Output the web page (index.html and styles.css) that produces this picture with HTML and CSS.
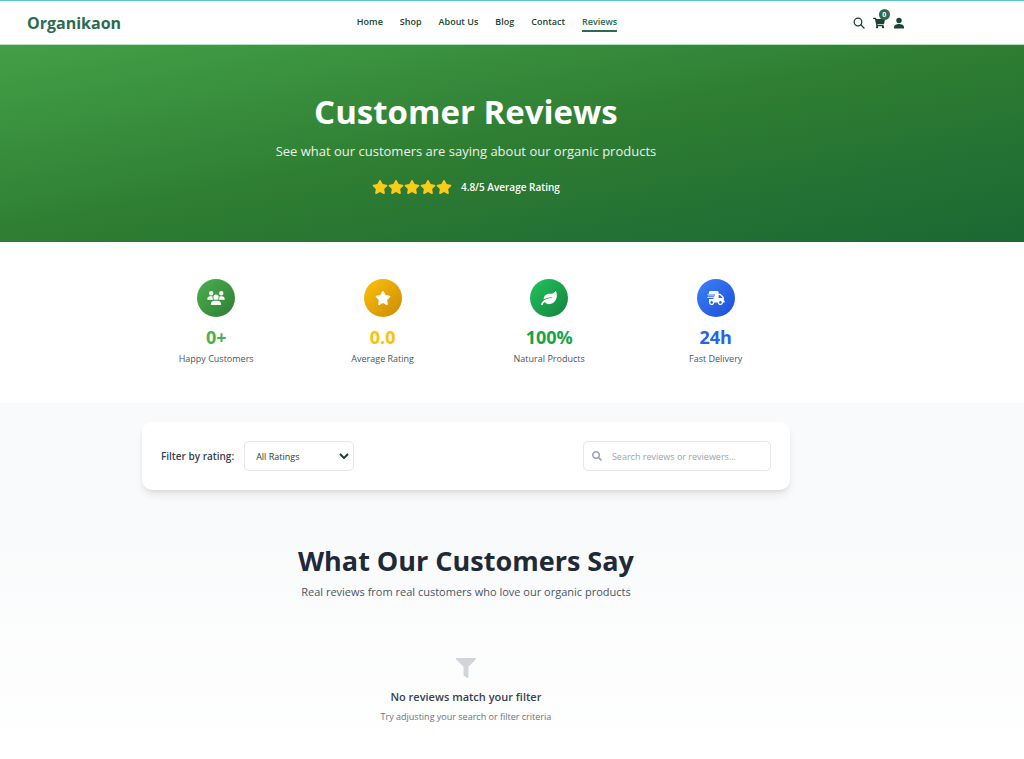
FILE: index.html
```html
<!DOCTYPE html>
<html lang="en">
<head>
  <meta charset="UTF-8" />
  <meta name="viewport" content="width=device-width, initial-scale=1.0" />
  <title>Customer Reviews | Organikaon</title>
  <link rel="stylesheet" href="styles.css">
</head>
<body>
  <header class="site-header">
    <a href="#" class="logo">Organikaon</a>
    <nav class="nav">
      <a href="#">Home</a>
      <a href="#">Shop</a>
      <a href="#">About Us</a>
      <a href="#">Blog</a>
      <a href="#">Contact</a>
      <a href="#" class="active">Reviews</a>
    </nav>
    <div class="actions">
      <button type="button" aria-label="Search">
        <svg viewBox="0 0 24 24" fill="none" stroke="currentColor" stroke-width="2.6" stroke-linecap="round"><circle cx="10" cy="10" r="7.6"/><path d="M15.8 15.8L22 22"/></svg>
      </button>
      <button type="button" aria-label="Cart" class="cart">
        <svg viewBox="0 0 576 512" fill="currentColor"><path d="M528.12 301.319l47.273-208C578.806 78.301 567.391 64 551.99 64H159.208l-9.166-44.81C147.758 8.021 137.93 0 126.529 0H24C10.745 0 0 10.745 0 24v16c0 13.255 10.745 24 24 24h69.883l70.248 343.435C147.325 417.1 136 435.222 136 456c0 30.928 25.072 56 56 56s56-25.072 56-56c0-15.674-6.447-29.835-16.824-40h209.647C430.447 426.165 424 440.326 424 456c0 30.928 25.072 56 56 56s56-25.072 56-56c0-22.172-12.888-41.332-31.579-50.405l5.517-24.276c3.413-15.018-8.002-29.319-23.403-29.319H218.117l-6.545-32h293.145c11.206 0 20.92-7.754 23.403-18.681z"/></svg>
        <span class="badge">0</span>
      </button>
      <button type="button" aria-label="Account">
        <svg viewBox="0 0 24 24" fill="currentColor"><circle cx="12" cy="7" r="5.4"/><path d="M12 14c-4.500 0-10 2-10 6.500V23h20v-2.500C22 16 16.500 14 12 14z"/></svg>
      </button>
    </div>
  </header>

  <!-- Star shape shared by the hero rating and the stats -->
  <svg class="sprite" aria-hidden="true">
    <symbol id="star" viewBox="0 0 576 512"><path d="M259.3 17.8L194 150.2 47.9 171.5c-26.2 3.8-36.7 36.1-17.7 54.6l105.7 103-25 145.500c-4.500 26.3 23.2 46 46.4 33.7L288 439.6l130.7 68.7c23.2 12.2 50.9-7.4 46.4-33.7l-25-145.500 105.7-103c19-18.500 8.500-50.8-17.7-54.6L382 150.2 316.7 17.8c-11.7-23.6-45.6-23.9-57.4 0z"/></symbol>
  </svg>

  <section class="hero">
    <h1>Customer Reviews</h1>
    <p>See what our customers are saying about our organic products</p>
    <div class="rating">
      <div class="stars">
        <svg><use href="#star"/></svg>
        <svg><use href="#star"/></svg>
        <svg><use href="#star"/></svg>
        <svg><use href="#star"/></svg>
        <svg><use href="#star"/></svg>
      </div>
      <span>4.8/5 Average Rating</span>
    </div>
  </section>

  <section class="stats">
    <div class="stats-grid">
      <div class="stat customers">
        <div class="stat-icon">
          <svg viewBox="0 0 640 512" fill="currentColor"><path d="M144 0a80 80 0 1 1 0 160A80 80 0 1 1 144 0zM512 0a80 80 0 1 1 0 160A80 80 0 1 1 512 0zM0 298.7C0 239.8 47.8 192 106.7 192h42.7c15.9 0 31 3.5 44.6 9.7c-1.3 7.2-1.9 14.7-1.9 22.3c0 38.2 16.8 72.5 43.3 96c-.2 0-.4 0-.7 0H21.3C9.6 320 0 310.4 0 298.7zM405.3 320c-.2 0-.4 0-.7 0c26.6-23.5 43.3-57.8 43.3-96c0-7.6-.7-15-1.9-22.3c13.6-6.3 28.7-9.7 44.6-9.7h42.7C592.2 192 640 239.8 640 298.7c0 11.8-9.6 21.3-21.3 21.3H405.3zM224 224a96 96 0 1 1 192 0 96 96 0 1 1 -192 0zM128 485.3C128 411.7 187.7 352 261.3 352H378.7C452.3 352 512 411.7 512 485.3c0 14.7-11.9 26.7-26.7 26.7H154.7c-14.7 0-26.7-11.9-26.7-26.7z"/></svg>
        </div>
        <div class="stat-value">0+</div>
        <div class="stat-label">Happy Customers</div>
      </div>
      <div class="stat average">
        <div class="stat-icon">
          <svg fill="currentColor"><use href="#star"/></svg>
        </div>
        <div class="stat-value">0.0</div>
        <div class="stat-label">Average Rating</div>
      </div>
      <div class="stat natural">
        <div class="stat-icon">
          <svg viewBox="0 0 576 512" fill="currentColor"><path d="M546.2 9.7c-5.6-12.5-21.6-13-28.3-1.2C486.9 62.4 431.4 96 368 96h-80C182 96 96 182 96 288c0 7 .8 13.7 1.5 20.5C161.3 262.8 253.4 224 384 224c8.8 0 16 7.2 16 16s-7.2 16-16 16C132.6 256 26 410.1 2.4 468c-6.6 16.3 1.2 34.9 17.5 41.6 16.4 6.8 35-1.1 41.8-17.3 1.5-3.6 20.9-47.9 71.9-90.6 32.4 43.9 94 85.8 174.9 77.2C465.5 467.5 576 326.7 576 154.3c0-50.2-10.8-102.2-29.8-144.6z"/></svg>
        </div>
        <div class="stat-value">100%</div>
        <div class="stat-label">Natural Products</div>
      </div>
      <div class="stat delivery">
        <div class="stat-icon">
          <svg viewBox="0 0 640 512" fill="currentColor"><path d="M624 352h-16V243.9c0-12.7-5.1-24.9-14.1-33.9L494 110.1c-9-9-21.2-14.1-33.9-14.1H416V48c0-26.5-21.5-48-48-48H112C85.5 0 64 21.5 64 48v48H8c-4.4 0-8 3.6-8 8v16c0 4.4 3.6 8 8 8h272c4.4 0 8 3.6 8 8v16c0 4.4-3.6 8-8 8H40c-4.4 0-8 3.6-8 8v16c0 4.4 3.6 8 8 8h208c4.4 0 8 3.6 8 8v16c0 4.4-3.6 8-8 8H8c-4.4 0-8 3.6-8 8v16c0 4.4 3.6 8 8 8h208c4.4 0 8 3.6 8 8v16c0 4.4-3.6 8-8 8H64v128c0 53 43 96 96 96s96-43 96-96h128c0 53 43 96 96 96s96-43 96-96h48c8.8 0 16-7.2 16-16v-32c0-8.8-7.2-16-16-16zM160 464c-26.5 0-48-21.5-48-48s21.5-48 48-48 48 21.5 48 48-21.5 48-48 48zm320 0c-26.5 0-48-21.5-48-48s21.5-48 48-48 48 21.5 48 48-21.5 48-48 48zm80-208H416V144h44.1l99.9 99.9V256z"/></svg>
        </div>
        <div class="stat-value">24h</div>
        <div class="stat-label">Fast Delivery</div>
      </div>
    </div>
  </section>

  <main class="reviews">
    <div class="filter-card">
      <div class="filter-group">
        <label for="rating-filter">Filter by rating:</label>
        <div class="select-wrap">
          <select id="rating-filter">
            <option>All Ratings</option>
            <option>5 Stars</option>
            <option>4 Stars</option>
            <option>3 Stars</option>
            <option>2 Stars</option>
            <option>1 Star</option>
          </select>
          <svg viewBox="0 0 10 6" fill="none" stroke="currentColor" stroke-width="2"><path d="M1 1l4 4 4-4"/></svg>
        </div>
      </div>
      <div class="search-wrap">
        <svg viewBox="0 0 512 512" fill="currentColor"><path d="M505 442.7L405.3 343c-4.5-4.5-10.6-7-17-7H372c27.6-35.3 44-79.7 44-128C416 93.1 322.9 0 208 0S0 93.1 0 208s93.1 208 208 208c48.3 0 92.7-16.4 128-44v16.3c0 6.4 2.5 12.5 7 17l99.7 99.7c9.4 9.4 24.6 9.4 33.9 0l28.3-28.3c9.4-9.4 9.4-24.6.1-34zM208 336c-70.7 0-128-57.2-128-128 0-70.7 57.2-128 128-128 70.7 0 128 57.2 128 128 0 70.7-57.2 128-128 128z"/></svg>
        <input type="text" placeholder="Search reviews or reviewers..." aria-label="Search reviews or reviewers" />
      </div>
    </div>

    <div class="section-title">
      <h2>What Our Customers Say</h2>
      <p>Real reviews from real customers who love our organic products</p>
    </div>

    <div class="empty">
      <svg viewBox="0 0 512 512" fill="currentColor"><path d="M487.976 0H24.028C2.71 0-8.047 25.866 7.058 40.971L192 225.941V432c0 7.831 3.821 15.17 10.237 19.662l80 55.98C298.02 518.69 320 507.493 320 487.98V225.941l184.947-184.97C520.021 25.896 509.338 0 487.976 0z"/></svg>
      <h3>No reviews match your filter</h3>
      <p>Try adjusting your search or filter criteria</p>
    </div>
  </main>
</body>
</html>
```

FILE: styles.css
```css
* {
  box-sizing: border-box;
}
body {
  margin: 0;
  min-height: 100vh;
  display: flex;
  flex-direction: column;
  font-family: "Segoe UI", "Open Sans", "Noto Sans", sans-serif;
  background: #fff;
  color: #1b4332;
}
h1, h2, h3, p {
  margin: 0;
}
a {
  color: inherit;
  text-decoration: none;
}
.sprite {
  display: none;
}

/* Header */
.site-header {
  display: flex;
  align-items: center;
  justify-content: space-between;
  height: 45px;
  padding: 0 calc(9% + 27px) 0 27px;
  border-top: 1px solid #5bc5c9;
  border-bottom: 1px solid #b7dfc4;
}
.logo {
  font-size: 16px;
  font-weight: 700;
  color: #2d6a4f;
}
.nav {
  display: flex;
  gap: 17px;
  font-size: 9px;
  line-height: 14px;
  font-weight: 600;
}
.nav a {
  padding: 2px 0 1px;
  border-bottom: 2px solid transparent;
}
.nav .active {
  color: #2d6a4f;
  border-color: #2d6a4f;
}
.actions {
  display: flex;
  align-items: center;
  gap: 8px;
}
.actions button {
  position: relative;
  display: flex;
  padding: 0;
  border: none;
  background: none;
  color: #1b4332;
  cursor: pointer;
}
.actions svg {
  width: 12px;
  height: 12px;
}
.badge {
  position: absolute;
  top: -8px;
  right: -5px;
  width: 11px;
  height: 11px;
  border-radius: 50%;
  background: #2d6a4f;
  color: #fff;
  font-family: "Open Sans", sans-serif;
  font-size: 7px;
  line-height: 11px;
  font-weight: 700;
  text-align: center;
}

/* Hero */
.hero {
  padding: 46px 9% 46px 0;
  background: linear-gradient(to bottom right, #43a047, #2e7d32, #1b6834);
  color: #fff;
  text-align: center;
}
.hero h1 {
  font-size: 33px;
  line-height: 42px;
  font-weight: 700;
}
.hero p {
  margin: 7px 0 16px;
  font-size: 13px;
  line-height: 22px;
  opacity: 0.9;
}
.rating {
  display: flex;
  align-items: center;
  justify-content: center;
  gap: 9px;
  font-size: 10px;
  line-height: 18px;
  font-weight: 600;
}
.stars {
  display: flex;
}
.stars svg {
  width: 16px;
  height: 14px;
  fill: #facc15;
}

/* Stats */
.stats {
  padding: 37px 9% 37px 0;
}
.stats-grid {
  display: grid;
  grid-template-columns: repeat(4, 1fr);
  gap: 18px;
  max-width: 648px;
  margin: 0 auto;
}
.stat {
  display: flex;
  flex-direction: column;
  align-items: center;
}
.stat-icon {
  display: flex;
  align-items: center;
  justify-content: center;
  width: 38px;
  height: 38px;
  border-radius: 50%;
  color: #fff;
}
.stat-icon svg {
  width: 18px;
  height: 14px;
}
.stat-value {
  margin: 8px 0 3px;
  font-size: 18px;
  line-height: 24px;
  font-weight: 700;
}
.stat-label {
  font-size: 9px;
  line-height: 14px;
  color: #4b5563;
}
.customers .stat-icon {
  background: linear-gradient(to bottom right, #4caf50, #2e7d32);
}
.customers .stat-value {
  color: #4caf50;
}
.average .stat-icon {
  background: linear-gradient(to bottom right, #ffc107, #ca8a04);
}
.average .stat-value {
  color: #ffc107;
}
.natural .stat-icon {
  background: linear-gradient(to bottom right, #22c55e, #15803d);
}
.natural .stat-value {
  color: #16a34a;
}
.delivery .stat-icon {
  background: linear-gradient(to bottom right, #3b82f6, #1d4ed8);
}
.delivery .stat-value {
  color: #2563eb;
}

/* Reviews */
.reviews {
  flex: 1;
  padding: 19px 9% 32px 0;
  background: linear-gradient(to bottom, #f9fafb, #f9fafb 35%, #fff);
}
.filter-card {
  display: flex;
  align-items: center;
  justify-content: space-between;
  max-width: 648px;
  margin: 0 auto;
  padding: 19px;
  border-radius: 10px;
  background: #fff;
  box-shadow: 0 6px 10px -2px rgba(0, 0, 0, 0.1), 0 2px 4px -2px rgba(0, 0, 0, 0.1);
}
.filter-group {
  display: flex;
  align-items: center;
  gap: 10px;
}
.filter-group label {
  font-size: 10px;
  font-weight: 600;
  color: #374151;
}
.select-wrap,
.search-wrap {
  position: relative;
}
.select-wrap select,
.search-wrap input {
  display: block;
  height: 30px;
  border: 1px solid #e5e7eb;
  border-radius: 5px;
  background: #fff;
  font-family: inherit;
  font-size: 9px;
  color: #1b4332;
}
.select-wrap select {
  appearance: none;
  width: 110px;
  padding: 0 20px 0 11px;
}
.select-wrap svg {
  position: absolute;
  right: 5px;
  top: 12px;
  width: 10px;
  height: 6px;
  pointer-events: none;
}
.search-wrap input {
  width: 188px;
  padding: 0 9px 0 28px;
}
.search-wrap input::placeholder {
  color: #9ca3af;
}
.search-wrap svg {
  position: absolute;
  left: 9px;
  top: 10px;
  width: 10px;
  height: 10px;
  color: #9ca3af;
}
.section-title {
  margin-top: 53px;
  text-align: center;
}
.section-title h2 {
  font-size: 27px;
  line-height: 36px;
  font-weight: 700;
  color: #1f2937;
}
.section-title p {
  margin-top: 4px;
  font-size: 11px;
  line-height: 18px;
  color: #4b5563;
}
.empty {
  display: flex;
  flex-direction: column;
  align-items: center;
  margin-top: 57px;
}
.empty svg {
  width: 22px;
  height: 20px;
  color: #d1d5db;
}
.empty h3 {
  margin: 10px 0 4px;
  font-size: 11px;
  line-height: 18px;
  font-weight: 600;
  color: #374151;
}
.empty p {
  font-size: 9px;
  line-height: 14px;
  color: #6b7280;
}
```
